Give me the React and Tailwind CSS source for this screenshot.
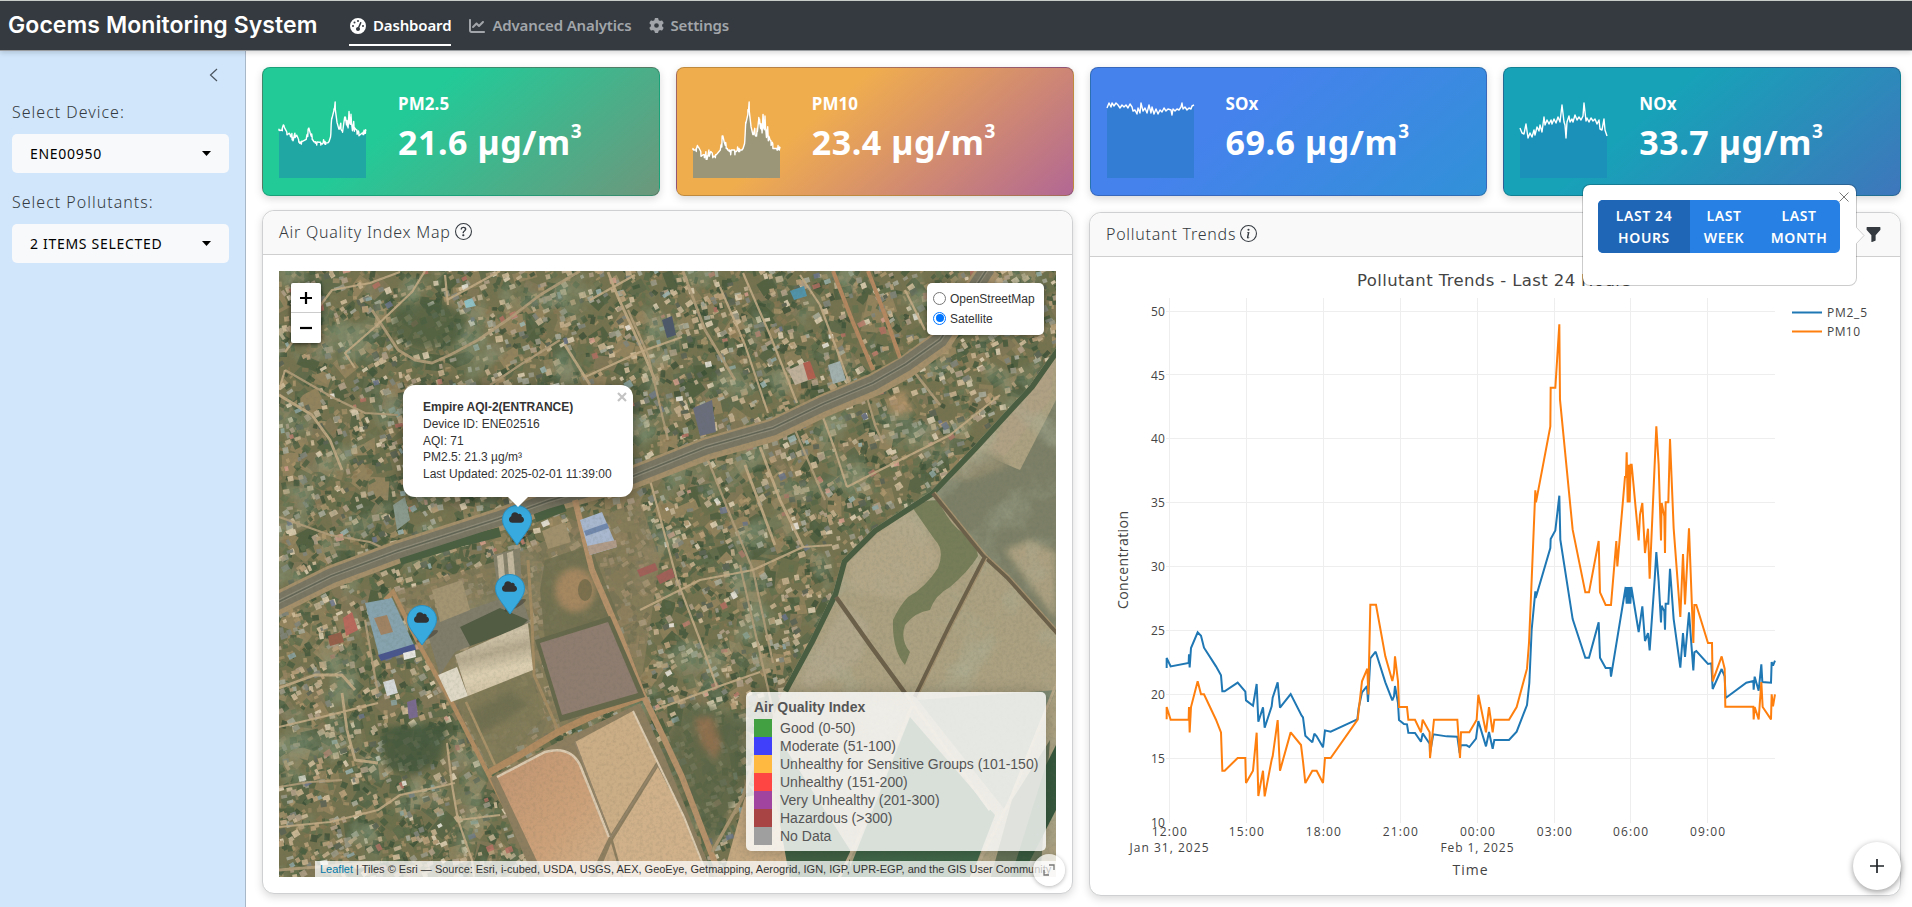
import React from "react";
import { FaCloud } from "react-icons/fa";
import { FaChartLine, FaGaugeHigh, FaGear } from "react-icons/fa6";
import { BsQuestionCircle, BsInfoCircle, BsFunnelFill } from "react-icons/bs";

const PM25 =
  "260,265 260,235 272,260 326,250 327,224 329,263 333,205 353,158 363,168 372,204 408,260 423,287 427,335 434,335 473,309 496,336 498,362 519,378 530,313 535,426 549,383 554,444 575,380 578,354 593,308 600,384 632,343 665,408 669,413 676,468 697,488 703,462 710,470 729,503 735,452 752,456 832,419 836,385 846,338 861,319 864,367 871,236 887,216 916,308 937,362 942,350 945,319 954,370 957,421 972,433 981,434 985,459 1005,460 1023,486 1028,461 1049,492 1050,520 1060,464 1100,470 1132,471 1139,520 1142,497 1160,497 1168,502 1188,477 1195,424 1218,500 1227,457 1238,507 1243,481 1287,481 1310,456 1341,376 1348,310 1355,150 1366,35 1367,55 1411,-95 1412,-122 1426,-148 1438,-252 1441,-120 1478,118 1516,234 1527,234 1556,128 1560,234 1577,265 1591,265 1593,291 1637,22 1640,72 1642,22 1645,72 1648,22 1651,72 1654,22 1676,157 1687,80 1695,184 1704,160 1709,212 1724,0 1729,-83 1736,5 1743,128 1745,78 1753,95 1755,150 1757,72 1765,72 1770,-33 1781,118 1801,264 1809,160 1815,232 1827,98 1840,272 1843,218 1849,214 1884,253 1894,251 1898,328 1925,268 1934,290 1937,355 1999,309 2020,304 2021,330 2024,291 2036,333 2044,254 2047,307 2073,309 2075,247 2079,258 2085,243";
const PM10 =
  "260,419 260,382 272,420 326,420 327,382 329,458 333,382 353,305 363,344 372,344 408,420 423,458 427,573 434,573 473,535 496,535 498,610 519,573 530,459 535,649 549,573 554,650 575,540 578,530 593,421 600,573 632,458 663,496 669,545 672,573 676,610 697,573 710,573 729,610 735,535 752,535 833,420 846,305 862,267 865,344 871,75 888,75 916,230 937,304 942,280 945,230 954,305 957,382 981,382 985,420 1005,420 1023,458 1028,420 1049,458 1050,535 1062,420 1132,420 1140,535 1143,458 1168,458 1190,420 1195,345 1218,458 1227,382 1238,458 1243,420 1287,420 1310,382 1341,267 1347,190 1353,50 1366,-268 1368,-232 1411,-460 1412,-576 1426,-576 1438,-766 1440,-540 1478,-150 1516,38 1527,38 1556,-116 1560,38 1577,76 1593,76 1609,-116 1612,-40 1635,-308 1638,-308 1640,-382 1643,-232 1646,-345 1649,-232 1652,-345 1655,-345 1676,-118 1680,-195 1687,-230 1695,-80 1704,-153 1709,-3 1729,-460 1736,-345 1743,-118 1745,-230 1753,-190 1755,-80 1757,-232 1765,-232 1770,-422 1781,-154 1801,112 1809,-77 1815,74 1827,-154 1840,190 1843,76 1849,76 1884,190 1896,190 1898,305 1925,230 1934,267 1936,381 2020,381 2021,419 2024,382 2036,419 2044,307 2048,382 2073,419 2075,344 2079,380 2085,344";
const SOX =
  "0,6 2,1 4,5 5,1 7,4 9,1 11,3 13,6 15,3 17,5 19,3 21,6 23,2 25,5 26,9 28,8 30,12 31,6 33,11 34,1 36,9 38,6 40,11 42,3 44,11 45,5 47,12 49,7 51,12 53,8 55,10 57,6 59,9 61,7 64,8 65,13 66,7 68,9 70,7 72,8 74,5 75,1 76,7 78,5 80,8 82,6 84,7 85,4 87,3";
const NOX =
  "0,26 2,31 4,32 6,22 8,36 10,31 12,35 14,28 15,33 17,25 19,29 20,23 22,30 24,15 25,23 27,18 29,22 31,18 32,22 34,17 36,21 38,15 40,20 42,3 44,20 45,23 46,36 47,20 49,14 50,20 52,17 53,20 55,13 57,18 59,15 61,18 63,14 64,1 66,19 67,16 69,20 71,16 73,19 75,17 77,22 79,18 80,27 82,28 84,17 85,28 87,34";

function Spark({ points, box, x0, x1, y1, fill }) {
  return (
    <svg className="w-[87px] h-[76px] shrink-0 overflow-visible" viewBox={box} preserveAspectRatio="none">
      <polygon points={`${x0},${y1} ${points} ${x1},${y1}`} fill={fill} />
      <polyline points={points} fill="none" stroke="#fff" strokeWidth="1.4" strokeLinejoin="round" vectorEffect="non-scaling-stroke" />
    </svg>
  );
}

function ValueBox({ title, value, gradient, children }) {
  return (
    <div className={`h-[129px] rounded-lg border border-black/20 shadow-[0_3px_8px_rgba(0,0,0,0.15)] flex pt-[34px] pl-4 text-white font-bold ${gradient}`}>
      {children}
      <div className="ml-8 -mt-[9px] whitespace-nowrap">
        <div className="text-[17px] leading-[22px] tracking-[0.1px]">{title}</div>
        <div className="mt-[5px] text-[34px] leading-[44px] tracking-[0.55px]">
          {value} µg/m<span className="relative -top-[17px] text-[19px] leading-none">3</span>
        </div>
      </div>
    </div>
  );
}

/* ---------- satellite tile ---------- */

function makeRandom(seed) {
  let s = seed;
  return () => {
    s = (s * 1664525 + 1013904223) % 4294967296;
    return s / 4294967296;
  };
}

function quads(count, colors, min, max, seed, angle, spread) {
  const r = makeRandom(seed);
  const out = colors.map(() => []);
  for (let i = 0; i < count; i++) {
    const x = 275 + r() * 785;
    const y = 268 + r() * 612;
    const w = min + r() * (max - min);
    const h = min + r() * (max - min) * 0.8;
    const a = angle + (r() - 0.5) * spread;
    const c = Math.cos(a);
    const s = Math.sin(a);
    const k = Math.floor(r() * colors.length);
    out[k].push(
      `M${x.toFixed(1)} ${y.toFixed(1)}l${(w * c).toFixed(1)} ${(w * s).toFixed(1)}l${(-h * s).toFixed(1)} ${(h * c).toFixed(1)}l${(-w * c).toFixed(1)} ${(-w * s).toFixed(1)}z`
    );
  }
  return out.map((d, i) => ({ d: d.join(""), fill: colors[i] }));
}

const ground = quads(1500, ["#4f6143", "#59694a", "#93835f", "#85795a", "#465a3e", "#9f8963", "#6a6e4b"], 8, 26, 7, 0.4, 3);
const trees = quads(3600, ["#3e5438", "#475c3e", "#384e34", "#556848", "#62704d"], 3, 8, 31, 0.8, 6);
const dirt = quads(3000, ["#ab946c", "#978562", "#8a7853", "#b89e74"], 2, 7, 55, -0.35, 1);
const houses = quads(3600, ["#d2bd9b", "#c0b192", "#a9ab99", "#ddceb1", "#9a9885", "#81857a", "#b09f87", "#c6b08d", "#5c6454", "#bba17c"], 3, 7.5, 97, -0.38, 0.5);
const tinted = quads(360, ["#c07d6e", "#b46f62", "#8fa7a5", "#9cb5b2", "#d69e8c", "#efebe2", "#6b748a"], 3, 8, 211, -0.38, 0.5);

const roads = [
  "372,310 385,330 398,350 415,360 432,363 450,355 478,340 510,318 540,295 565,280 580,271",
  "425,271 412,292 375,327 345,353 355,368",
  "285,352 332,290 370,283 400,272",
  "285,370 332,397 365,413 398,415",
  "279,395 312,415 330,440 342,470",
  "285,370 279,390",
  "279,517 330,535 370,542 392,552",
  "682,337 640,352 585,377",
  "608,272 618,297 640,345 655,380",
  "628,310 648,355 668,440",
  "743,273 770,335 797,403",
  "720,287 745,345 768,413",
  "683,271 705,330 735,380",
  "800,275 820,305 850,385",
  "905,290 925,330",
  "708,460 730,515 753,570 773,663",
  "760,447 780,500 803,547",
  "823,417 835,450 847,487",
  "867,397 875,425 883,443",
  "650,480 677,580 700,640 717,687",
  "745,465 775,545",
  "795,430 825,500",
  "753,570 803,547 832,545",
  "847,487 880,470 950,435 1000,395",
  "915,373 940,405",
  "640,610 700,580 753,570",
  "655,710 717,687 760,672",
  "740,565 775,720",
  "279,688 315,675 342,675 355,690",
  "279,727 330,715 378,703",
  "279,787 310,782 342,780",
  "279,827 330,822 378,810 400,795 425,790 455,783",
  "342,693 347,730 355,760 378,763",
  "365,620 372,660 378,693",
  "447,743 452,785 458,820 500,815",
  "458,820 472,860 474,877",
  "279,870 330,866 380,862",
  "500,271 447,300",
  "445,275 448,305",
  "560,340 520,365 490,385",
  "565,345 590,385",
  "635,275 590,300",
];

function Layer({ items }) {
  return items.map((q, i) => <path key={i} d={q.d} fill={q.fill} />);
}

function Satellite() {
  return (
    <svg className="block w-full h-full" viewBox="279 271 777 606" preserveAspectRatio="none">
      <defs>
        <filter id="grain" x="0" y="0" width="100%" height="100%">
          <feTurbulence type="fractalNoise" baseFrequency="0.3" numOctaves="3" seed="4" />
          <feColorMatrix values="0 0 0 0 0.1  0 0 0 0 0.12  0 0 0 0 0.08  1.6 0 0 0 -0.65" />
        </filter>
        <filter id="patches" x="0" y="0" width="100%" height="100%">
          <feTurbulence type="fractalNoise" baseFrequency="0.022" numOctaves="5" seed="9" />
          <feColorMatrix values="0 0 0 0 0.24  0 0 0 0 0.32  0 0 0 0 0.2  4 0 0 0 -2.1" />
        </filter>
        <filter id="silt" x="0" y="0" width="100%" height="100%">
          <feTurbulence type="fractalNoise" baseFrequency="0.02" numOctaves="5" seed="21" />
          <feColorMatrix values="0 0 0 0 0.42  0 0 0 0 0.45  0 0 0 0 0.33  3 0 0 0 -1.5" />
        </filter>
        <filter id="soft"><feGaussianBlur stdDeviation="0.5" /></filter>
        <filter id="blur"><feGaussianBlur stdDeviation="3" /></filter>
        <clipPath id="lagoon">
          <path d="M1056 348L1030 385L973 447L930 492L873 529L842 560L833 593L810 640L783 690L765 740L790 880H1056Z" />
        </clipPath>
        <linearGradient id="shed" x1="0" y1="0" x2="0.25" y2="1">
          <stop offset="0" stopColor="#a59a83" /><stop offset="0.3" stopColor="#cfc3a8" />
          <stop offset="0.5" stopColor="#b5a98e" /><stop offset="0.75" stopColor="#ddd0b2" /><stop offset="1" stopColor="#cfc1a3" />
        </linearGradient>
        <linearGradient id="salt" x1="0" y1="0" x2="1" y2="1">
          <stop offset="0" stopColor="#c09470" /><stop offset="0.6" stopColor="#cda27a" /><stop offset="1" stopColor="#d1b28c" />
        </linearGradient>
      </defs>
      <rect x="279" y="271" width="777" height="606" fill="#75734f" />
      <g filter="url(#soft)">
        <g opacity="0.7"><Layer items={ground} /></g>
        <g opacity="0.7"><Layer items={dirt} /></g>
        <g opacity="0.75"><Layer items={trees} /></g>
        <g opacity="0.9"><Layer items={houses} /></g>
        <g opacity="0.85"><Layer items={tinted} /></g>
        <rect x="279" y="271" width="777" height="606" filter="url(#patches)" opacity="0.55" />
        <ellipse cx="428" cy="325" rx="38" ry="24" fill="#465c3c" opacity="0.7" filter="url(#blur)" />
        <path d="M380 728L450 722L440 760L415 775L385 770Z" fill="#43573a" opacity="0.8" filter="url(#blur)" />
        <path d="M655 755L690 700L745 720L742 790L712 845Z" fill="#5c6647" opacity="0.75" filter="url(#blur)" />
        <path d="M695 718L712 716L722 745L715 760L700 742Z" fill="#9a7250" opacity="0.8" filter="url(#blur)" />
        <path d="M885 400L905 390L915 412L895 415Z" fill="#b8946a" opacity="0.8" filter="url(#blur)" />

        {/* industrial yards */}
        <path d="M395 592L500 560L640 500L660 560L640 690L560 735L490 770L440 690Z" fill="#8f8060" opacity="0.65" />
        <path d="M545 560L590 545L620 620L545 640L540 590Z" fill="#70704f" opacity="0.85" />
        <ellipse cx="575" cy="590" rx="20" ry="22" fill="#a58760" filter="url(#blur)" />
        <ellipse cx="585" cy="590" rx="7" ry="11" fill="#6a6547" opacity="0.7" />
        <path d="M455 700L528 670L545 715L500 765L488 765Z" fill="#817a58" opacity="0.8" />
        <path d="M470 712L510 690L530 705L480 735Z" fill="#66694b" opacity="0.6" filter="url(#blur)" />
        <path d="M425 625L520 592L530 622L455 652L440 675Z" fill="#807d6b" />
        <path d="M432 590L462 580L470 610L440 622Z" fill="#a39472" />
        <path d="M493 555L520 548L522 595L500 605Z" fill="#84806b" />
        <path d="M497 556l6 -2l3 34l-6 3z M507 553l6 -2l3 34l-6 3z" fill="#c2b79e" />
        <path d="M460 627L500 608L528 620L520 628L470 646Z" fill="#515b43" />

        {/* streets */}
        {roads.map((p, i) => (
          <polyline key={i} points={p} fill="none" stroke={i % 3 ? "#c2ab85" : "#b39d7a"} strokeWidth={i % 4 ? 2.2 : 2.8} strokeLinejoin="round" opacity="0.9" />
        ))}
        <polyline points="833,271 852,320 873,370" fill="none" stroke="#b48860" strokeWidth="4" />
        <polyline points="868,271 885,315 900,358" fill="none" stroke="#b48860" strokeWidth="4" />

        {/* highway */}
        <polyline points="270,607 331,577 398,552 498,520 548,502 631,478 706,449 773,430 823,406 873,385 906,367 940,342 965,305 990,268" fill="none" stroke="#a48f6a" strokeWidth="23" />
        <polyline points="400,560 460,542 500,532" fill="none" stroke="#4a5f40" strokeWidth="10" />
        <polyline points="535,518 565,507" fill="none" stroke="#4a5f40" strokeWidth="9" />
        <polyline points="270,606 331,576 398,551 498,519 548,501 631,477 706,447 773,428 823,404 873,383 906,364 940,340 965,303 988,268" fill="none" stroke="#797664" strokeWidth="15" />
        <polyline points="270,606 331,576 398,551 498,519 548,501 631,477 706,447 773,428 823,404 873,383 906,364 940,340 965,303 988,268" fill="none" stroke="#8f8b78" strokeWidth="4" />
        <polyline points="270,606 331,576 398,551 498,519 548,501 631,477 706,447 773,428 823,404 873,383 906,364 940,340 965,303 988,268" fill="none" stroke="#626555" strokeWidth="1.6" />

        {/* dirt tracks round the ponds */}
        <polyline points="385,600 393,592 422,650 452,703 495,787 538,870 545,880" fill="none" stroke="#b18c62" strokeWidth="4.5" />
        <polyline points="528,560 532,620 534,675 558,730" fill="none" stroke="#a28a62" strokeWidth="3" />
        <polyline points="575,500 592,570 620,635 642,693 660,730 682,777 712,855 722,880" fill="none" stroke="#b5916a" strokeWidth="6" />
        <polyline points="488,773 520,755 558,732 600,712 642,697" fill="none" stroke="#b08a61" strokeWidth="7" />
        <polyline points="712,852 743,797 760,740" fill="none" stroke="#a8946f" strokeWidth="3.5" />
        <polyline points="466,702 495,765" fill="none" stroke="#a99269" strokeWidth="2.5" />

        {/* buildings */}
        <path d="M365 603L392 598L415 647L379 656Z" fill="#86a3ae" />
        <path d="M374 618L387 615L393 632L381 635Z" fill="#a08364" />
        <path d="M378 655L414 644L416 650L381 661Z" fill="#4a568e" />
        <path d="M403 653L415 650L416 657L404 660Z" fill="#e8e6e0" />
        <path d="M343 618L352 612L358 630L346 636Z" fill="#b9675b" />
        <path d="M328 636L341 632L344 642L330 646Z" fill="#955e49" />
        <path d="M580 520L602 512L617 547L590 555Z" fill="#a9b8cf" />
        <path d="M584 531L607 523L609 528L586 536Z" fill="#7188ad" />
        <path d="M587 546L616 540L617 547L590 555Z" fill="#b09a88" />
        <path d="M542 531L565 522L571 542L548 549Z" fill="#a1906c" />
        <path d="M455 655L528 623L533 670L468 696Z" fill="url(#shed)" />
        <path d="M438 675L457 667L468 696L451 702Z" fill="#dfd8c6" />
        <path d="M393 505L405 497L410 520L397 530Z" fill="#8a9a8d" />
        <path d="M383 682L394 679L398 693L387 696Z" fill="#d5d8d8" />
        <path d="M407 702L416 699L418 717L409 719Z" fill="#796b8e" />
        <path d="M662 320L672 316L676 335L667 338Z" fill="#4d586b" />
        <path d="M693 408L712 400L716 432L700 436Z" fill="#6a6e7c" />
        <path d="M788 370L808 361L815 378L795 385Z" fill="#bfb09a" />
        <path d="M803 363L810 361L816 378L808 380Z" fill="#b25f50" />
        <path d="M790 291L804 286L807 296L794 300Z" fill="#5193a9" />
        <path d="M828 365L840 361L846 380L833 384Z" fill="#a2b0ae" />
        <path d="M464 301L472 298L476 306L466 308Z" fill="#8fc0c4" />
        <path d="M637 570L655 563L658 570L640 577Z M656 576L672 568L675 577L660 584Z" fill="#a06059" />

        {/* ponds */}
        <path d="M535 640L610 616L645 697L560 722Z" fill="#66684b" />
        <path d="M540 643L608 622L638 693L562 715Z" fill="#8f7d6f" />
        <path d="M490 778L558 742L640 703L665 757L715 880H535Z" fill="#8d7e5f" />
        <path d="M497 777L545 752Q570 745 580 765L609 837L588 880H546Z" fill="url(#salt)" />
        <path d="M575 742L633 711L657 761L611 834L582 760Z" fill="#ccae86" />
        <path d="M658 767L684 817L710 880H624L613 840Z" fill="#d0b18a" />
        <path d="M611 843L622 880H596Z" fill="#c6a883" />
        <path d="M497 777L545 752Q570 745 580 765L609 837" fill="none" stroke="#dccab0" strokeWidth="2.5" />
        <path d="M575 742L611 837L657 765" fill="none" stroke="#94856a" strokeWidth="1.5" />
        <path d="M633 711L657 761L684 817L708 877" fill="none" stroke="#dccbb0" strokeWidth="2" />
        <path d="M745 797L785 790L805 880H722Z" fill="#c4a881" />
      </g>

      {/* lagoon */}
      <g clipPath="url(#lagoon)">
        <rect x="740" y="340" width="316" height="540" fill="#aca181" />
        <path d="M1056 400L1020 470L985 455L933 492L1000 570L1056 633Z" fill="#7d8067" />
        <path d="M1056 350L1050 400L1030 425L1005 455L985 455L1005 420L1040 370Z" fill="#b0a184" />
        <path d="M940 478L985 450L1010 465L970 480Z" fill="#938c70" filter="url(#blur)" />
        <path d="M1005 550L1030 540L1056 552V620Z" fill="#aca081" filter="url(#blur)" />
        <rect x="740" y="340" width="316" height="540" filter="url(#silt)" opacity="0.5" />
        <path d="M850 560L905 510L925 530L940 560L905 600L850 590Z" fill="#b7aa8c" opacity="0.7" filter="url(#blur)" />
        <path d="M912 507Q922 500 938 500Q950 525 963 533Q978 545 978 556Q968 572 950 587Q935 595 930 610Q915 612 905 625Q900 640 910 652L905 665Q892 650 893 620Q900 605 908 597Q925 588 938 568Q945 550 935 540Z" fill="#767d58" />
        <path d="M845 605L870 625L860 660L810 690L800 680L830 630Z" fill="#b5aa92" opacity="0.6" filter="url(#blur)" />
        <path d="M918 700L1056 690L1005 810Z" fill="#7f8c75" />
        <path d="M780 740L850 850V880H780Z" fill="#3f5f42" />
        <path d="M910 717L995 815L970 880H845Z" fill="#3f6547" />
        <path d="M1012 800L1050 740L1040 880H990Z" fill="#637055" />
        <path d="M1046 765L1056 745V810L1020 880H1010Z" fill="#36583d" />
        <path d="M1056 348L1030 385L973 447L930 492L873 529L842 560L833 593L810 640L783 690" fill="none" stroke="#495d3f" strokeWidth="11" filter="url(#soft)" />
        <g fill="none" stroke="#6c604a" strokeWidth="4.5" filter="url(#soft)">
          <polyline points="933,493 983,555 1007,577 1060,636" />
          <polyline points="985,557 950,625 915,697" />
          <polyline points="836,597 870,645 905,693" />
        </g>
        <g fill="none" stroke="#b9aa8b" strokeWidth="3" filter="url(#soft)">
          <polyline points="905,693 990,810" />
          <polyline points="1058,680 1010,800 970,880" />
          <polyline points="838,880 860,835 913,703" />
        </g>
        <g fill="none" stroke="#a4916f" strokeWidth="1.4">
          <polyline points="935,492 985,554 1009,576 1060,633" />
          <polyline points="987,558 952,626 917,698" />
        </g>
      </g>
      <rect x="279" y="271" width="777" height="606" filter="url(#grain)" opacity="0.2" />
    </svg>
  );
}

function Marker({ className }) {
  return (
    <div className={`absolute w-[46px] h-[42px] ${className}`}>
      <svg className="absolute inset-0" width="46" height="42" viewBox="0 0 46 42">
        <ellipse cx="23" cy="34" rx="12" ry="3" fill="#000" opacity="0.28" transform="rotate(-28 16 38)" />
        <path d="M15 0.5C7 0.5 0.5 6.8 0.5 14.6C0.5 19.5 3.2 23.6 6 27.5L15 40L24 27.5C26.800 23.600 29.500 19.500 29.500 14.600C29.500 6.800 23 0.500 15 0.500Z" fill="#38aadd" stroke="#2c8fc0" strokeWidth="1" />
      </svg>
      <FaCloud className="absolute left-[7px] top-[5px] text-[#303234]" size={15} />
    </div>
  );
}

const legend = [
  ["bg-[#42a042]", "Good (0-50)"],
  ["bg-[#4040fb]", "Moderate (51-100)"],
  ["bg-[#ffb940]", "Unhealthy for Sensitive Groups (101-150)"],
  ["bg-[#ff4444]", "Unhealthy (151-200)"],
  ["bg-[#a0449f]", "Very Unhealthy (201-300)"],
  ["bg-[#a84444]", "Hazardous (>300)"],
  ["bg-[#9f9f9f]", "No Data"],
];

function MapView() {
  return (
    <div className="relative w-[777px] h-[606px] overflow-hidden font-['Liberation_Sans',Arial,sans-serif] text-xs text-[#333]">
      <Satellite />
      <Marker className="left-[223px] top-[234px]" />
      <Marker className="left-[216px] top-[303px]" />
      <Marker className="left-[128px] top-[334px]" />

      <div className="absolute left-3 top-3 w-[30px] rounded-xs bg-white text-black shadow-[0_1px_5px_rgba(0,0,0,0.65)]">
        <div className="h-[30px] border-b border-[#ccc] flex items-center justify-center">
          <svg width="14" height="14" viewBox="0 0 14 14"><path d="M7 1V13M1 7H13" stroke="#000" strokeWidth="2.2" /></svg>
        </div>
        <div className="h-[30px] flex items-center justify-center">
          <svg width="14" height="14" viewBox="0 0 14 14"><path d="M1 7H13" stroke="#000" strokeWidth="2.2" /></svg>
        </div>
      </div>

      <div className="absolute left-[648px] top-3 w-[117px] h-[52px] rounded-[5px] bg-white shadow-[0_1px_5px_rgba(0,0,0,0.4)] pl-1.5 pt-[5px]">
        <div className="flex items-center h-5 gap-1">
          <span className="w-[13px] h-[13px] rounded-full border border-[#767676] bg-white" />
          <span className="pt-0.5">OpenStreetMap</span>
        </div>
        <div className="flex items-center h-5 gap-1">
          <span className="w-[13px] h-[13px] rounded-full border-[1.5px] border-[#0075ff] bg-white flex items-center justify-center">
            <span className="w-2 h-2 rounded-full bg-[#0075ff]" />
          </span>
          <span className="pt-0.5">Satellite</span>
        </div>
      </div>

      <div className="absolute left-[124px] top-[114px] w-[230px] h-[112px] rounded-xl bg-white shadow-[0_3px_14px_rgba(0,0,0,0.4)] pl-5 pt-[14px] leading-[16.8px] whitespace-nowrap">
        <div className="font-bold">Empire AQI-2(ENTRANCE)</div>
        <div>Device ID: ENE02516</div>
        <div>AQI: 71</div>
        <div>PM2.5: 21.3 µg/m³</div>
        <div>Last Updated: 2025-02-01 11:39:00</div>
        <svg className="absolute left-[104px] top-[111px]" width="22" height="12" viewBox="0 0 22 12"><path d="M0 0H22L11 11Z" fill="#fff" /></svg>
        <svg className="absolute left-[214px] top-[7px]" width="10" height="10" viewBox="0 0 10 10"><path d="M1 1L9 9M9 1L1 9" stroke="#c3c3c3" strokeWidth="2.2" /></svg>
      </div>

      <div className="absolute left-[467px] top-[421px] w-[300px] h-[159px] rounded-[5px] bg-white/80 shadow-[0_0_15px_rgba(0,0,0,0.2)] pl-2 pt-[6px] text-sm text-[#555] whitespace-nowrap">
        <div className="font-bold leading-[18px] h-[21px]">Air Quality Index</div>
        {legend.map(([color, label]) => (
          <div key={label} className="flex h-[18px] leading-[18px]">
            <span className={`w-[18px] h-[18px] mr-2 ${color}`} />
            {label}
          </div>
        ))}
      </div>

      <div className="absolute right-0 bottom-0 w-[741px] h-4 bg-white/75 pl-[5px] text-[11px] leading-4 whitespace-nowrap">
        <span className="text-[#0078a8]">Leaflet</span> | Tiles © Esri — Source: Esri, i-cubed, USDA, USGS, AEX, GeoEye, Getmapping, Aerogrid, IGN, IGP, UPR-EGP, and the GIS User Community
      </div>
    </div>
  );
}

/* ---------- trends chart ---------- */

const yTicks = [50, 45, 40, 35, 30, 25, 20, 15, 10];
const xTicks = [
  [80.3, "12:00"], [157.3, "15:00"], [234.3, "18:00"], [311.3, "21:00"], [388.4, "00:00"], [465.3, "03:00"], [541.5, "06:00"], [618.5, "09:00"],
];

function TrendChart() {
  return (
    <svg className="block w-full h-full font-['Open_Sans',verdana,sans-serif]" viewBox="1 46 810 637" fill="#444">
      <text x="405" y="74.700" fontSize="16.500" textAnchor="middle" textLength="274" className="font-['DejaVu_Sans',sans-serif]">Pollutant Trends - Last 24 Hours</text>
      {yTicks.map((v) => {
        const y = 100 + (50 - v) * 12.78;
        return (
          <g key={v}>
            {v > 10 && <path d={`M77 ${Math.floor(y) + 0.5}H686`} stroke="#eee" />}
            <text x="76" y={y + 4.6} fontSize="12" letterSpacing="0.2" textAnchor="end">{v}</text>
          </g>
        );
      })}
      {xTicks.map(([x, label]) => (
        <g key={label}>
          <path d={`M${Math.floor(x) + 0.5} 87V612`} stroke="#eee" />
          <text x={x} y="625" fontSize="12" textAnchor="middle" textLength="35">{label}</text>
        </g>
      ))}
      <text x="80" y="641" fontSize="12" textAnchor="middle" textLength="79">Jan 31, 2025</text>
      <text x="388" y="641" fontSize="12" textAnchor="middle" textLength="73">Feb 1, 2025</text>
      <text x="381" y="664" fontSize="14" textAnchor="middle" textLength="35">Time</text>
      <text transform="translate(39 349) rotate(-90)" fontSize="14" textAnchor="middle" textLength="98">Concentration</text>
      <g transform="translate(-9 368.700) scale(0.33333)" fill="none" strokeWidth="6" strokeMiterlimit="2">
        <polyline points={PM25} stroke="#1f77b4" />
        <polyline points={PM10} stroke="#ff7f0e" />
      </g>
      <path d="M703 101.500H733" stroke="#1f77b4" strokeWidth="2" />
      <path d="M703 120.500H733" stroke="#ff7f0e" strokeWidth="2" />
      <text x="738" y="106" fontSize="12" textLength="40">PM2_5</text>
      <text x="738" y="125" fontSize="12" textLength="33">PM10</text>
    </svg>
  );
}

function Select({ label, value }) {
  return (
    <div>
      <div className="text-base leading-6 font-light tracking-[1px] text-[#343a40]">{label}</div>
      <div className="mt-[10px] h-[39px] rounded-[5px] bg-[#f8f9fa] flex items-center justify-between pl-[18px] pr-[18px] text-sm tracking-[0.7px] text-black">
        {value}
        <svg width="9" height="5" viewBox="0 0 9 5"><path d="M0 0H9L4.500 5Z" /></svg>
      </div>
    </div>
  );
}

export default function App() {
  return (
    <div className="w-[1912px] h-[907px] overflow-hidden bg-white flex flex-col font-['Noto_Sans',sans-serif] text-[#343a40]">
      <header className="relative z-10 h-[51px] shrink-0 bg-[#343a40] border-t border-b border-t-[#c8cdca] border-b-[#9a9da0] shadow-[0_2px_5px_rgba(0,0,0,0.15)] flex items-center pl-2 whitespace-nowrap">
        <div className="w-[341px] text-[23px] font-semibold text-white font-['Inter',sans-serif] tracking-[0.08px]">Gocems Monitoring System</div>
        <nav className="flex h-full text-[15px] font-semibold text-[#a2a6aa] gap-[18px] tracking-[-0.15px]">
          <div className="relative flex items-center gap-[7px] pl-px text-white">
            <FaGaugeHigh size={16} />
            Dashboard
            <span className="absolute left-0 right-0 top-[43px] h-0.5 bg-white" />
          </div>
          <div className="flex items-center gap-[7px]"><FaChartLine size={16} />Advanced Analytics</div>
          <div className="flex items-center gap-[6px]"><FaGear size={15} />Settings</div>
        </nav>
      </header>

      <div className="flex flex-1 min-h-0">
        <aside className="w-[246px] shrink-0 bg-[#d1e6fb] border-r border-[#a9b8c8] pl-3 pr-4">
          <div className="flex justify-end h-[49px] pt-[17px] pr-[11px]">
            <svg width="9" height="14" viewBox="0 0 9 14"><path d="M8 1L1.500 7L8 13" fill="none" stroke="#4a545e" strokeWidth="1.200" /></svg>
          </div>
          <div className="flex flex-col gap-[17px]">
            <Select label="Select Device:" value="ENE00950" />
            <Select label="Select Pollutants:" value="2 ITEMS SELECTED" />
          </div>
        </aside>

        <main className="flex-1 min-w-0 pl-4 pr-[11px] pt-4">
          <div className="grid grid-cols-4 gap-4">
            <ValueBox title="PM2.5" value="21.6" gradient="bg-[linear-gradient(140deg,#22ca98_36%,#73937a_105%)]">
              <Spark points={PM25} box="260 -252 1825 1363" x0={260} x1={2085} y1={1111} fill="#20a7a3" />
            </ValueBox>
            <ValueBox title="PM10" value="23.4" gradient="bg-[linear-gradient(140deg,#f0ad4e_36%,#ad6299_105%)]">
              <Spark points={PM10} box="260 -766 1825 1877" x0={260} x1={2085} y1={1111} fill="#9b9677" />
            </ValueBox>
            <ValueBox title="SOx" value="69.6" gradient="bg-[linear-gradient(140deg,#4582ec_36%,#3092d6_105%)]">
              <Spark points={SOX} box="0 0 87 76" x0={0} x1={87} y1={76} fill="#347dd5" />
            </ValueBox>
            <ValueBox title="NOx" value="33.7" gradient="bg-[linear-gradient(140deg,#17a2b8_36%,#4173bc_105%)]">
              <Spark points={NOX} box="0 0 87 76" x0={0} x1={87} y1={76} fill="#1b90b8" />
            </ValueBox>
          </div>

          <div className="flex items-start gap-4 mt-[14px]">
            <section className="w-[811px] h-[684px] rounded-xl border border-[#cfd0d1] bg-white shadow-[0_3px_8px_rgba(0,0,0,0.15)]">
              <div className="h-[44px] rounded-t-xl bg-[#f9f9f9] border-b border-[#cfcfcf] flex items-center gap-[4px] pl-4 pb-[2px] text-base font-light tracking-[0.75px]">
                Air Quality Index Map
                <BsQuestionCircle size={17} />
              </div>
              <div className="relative pl-4 pt-4">
                <MapView />
                <div className="absolute left-[770px] top-[599px] w-8 h-8 rounded-full bg-white/70 shadow-[0_1px_4px_rgba(0,0,0,0.3)] flex items-center justify-center">
                  <svg width="12" height="12" viewBox="0 0 12 12"><path d="M6 1H11V6M1 6V11H6" fill="none" stroke="#777" strokeWidth="1.300" /></svg>
                </div>
              </div>
            </section>

            <section className="relative mt-[2px] w-[812px] h-[684px] rounded-xl border border-[#cfd0d1] bg-white shadow-[0_3px_8px_rgba(0,0,0,0.15)]">
              <div className="h-[44px] rounded-t-xl bg-[#f9f9f9] border-b border-[#cfcfcf] flex items-center gap-[4px] pl-4 pr-[18px] pb-[2px] text-base font-light tracking-[0.75px]">
                Pollutant Trends
                <BsInfoCircle size={17} />
                <BsFunnelFill className="ml-auto mt-0.5" size={17} />
              </div>
              <div className="h-[637px]"><TrendChart /></div>

              <div className="absolute left-[492px] -top-[29px] w-[275px] h-[102px] rounded-lg border border-black/20 bg-clip-padding bg-white pl-[15px] pt-[15px]">
                <div className="flex w-[242px] h-[53px] rounded-[5px] overflow-hidden bg-[#2780e3] text-white text-center text-sm font-semibold tracking-[0.6px] leading-[22px]">
                  <div className="w-[92px] pt-[5px] bg-[#1f66b6]">LAST 24<br />HOURS</div>
                  <div className="w-[68px] pt-[5px]">LAST<br />WEEK</div>
                  <div className="w-[82px] pt-[5px]">LAST<br />MONTH</div>
                </div>
                <svg className="absolute left-[256px] top-[7px]" width="10" height="10" viewBox="0 0 10 10"><path d="M0.500 0.500L9.500 9.500M9.500 0.500L0.500 9.500" stroke="#777" /></svg>
                <svg className="absolute left-[272px] top-[42px]" width="10" height="17" viewBox="0 0 10 17"><path d="M1 0L9 8.500L1 17" fill="#fff" stroke="#d0d0d0" /></svg>
              </div>

              <div className="absolute left-[763px] top-[629px] w-12 h-12 rounded-full bg-white shadow-[0_2px_6px_rgba(0,0,0,0.4)] flex items-center justify-center">
                <svg width="14" height="14" viewBox="0 0 14 14"><path d="M7 0V14M0 7H14" stroke="#212529" strokeWidth="1.700" /></svg>
              </div>
            </section>
          </div>
        </main>
      </div>
    </div>
  );
}
